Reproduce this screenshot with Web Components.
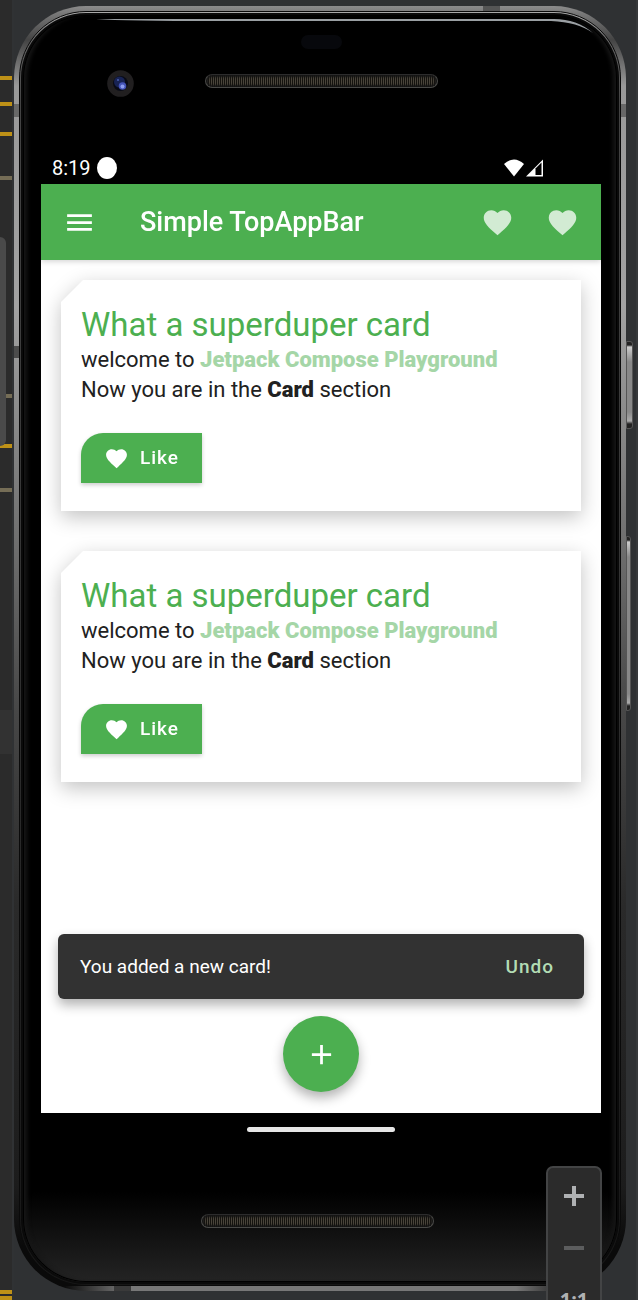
<!DOCTYPE html>
<html lang="en">
<head>
<meta charset="utf-8">
<meta name="viewport" content="width=device-width, initial-scale=1">
<title>Emulator</title>
<style>
  html, body { margin: 0; background: #2f3133; }
  body { font-family: Roboto, "Liberation Sans", sans-serif; }
</style>
</head>
<body>
<emulator-window>
  <phone-frame>
    <status-bar slot="status" time="8:19"></status-bar>
    <app-bar heading="Simple TopAppBar"></app-bar>
    <card-list>
      <play-card heading="What a superduper card"></play-card>
      <play-card heading="What a superduper card"></play-card>
    </card-list>
    <snack-bar action="Undo">You added a new card!</snack-bar>
    <add-fab></add-fab>
  </phone-frame>
  <zoom-panel slot="tools"></zoom-panel>
</emulator-window>

<script>
const HEART = '<path d="M12 21.35l-1.45-1.32C5.4 15.36 2 12.28 2 8.5 2 5.42 4.42 3 7.5 3c1.74 0 3.41.81 4.5 2.09C13.09 3.81 14.76 3 16.5 3 19.58 3 22 5.42 22 8.5c0 3.78-3.4 6.86-8.55 11.54L12 21.35z"/>';

function define(name, html) {
  customElements.define(name, class extends HTMLElement {
    constructor() {
      super();
      const t = document.createElement('template');
      t.innerHTML = html;
      this.attachShadow({ mode: 'open' }).append(t.content.cloneNode(true));
    }
    connectedCallback() {
      for (const el of this.shadowRoot.querySelectorAll('[data-attr]'))
        el.textContent = this.getAttribute(el.dataset.attr) || '';
    }
  });
}

define('emulator-window', `
<style>
  :host { display: flex; min-height: 100vh; position: relative; overflow: hidden; background: #2f3133; box-sizing: border-box; }
  .gutter { flex: none; width: 12px; background: #2b2b2b; border-right: 2px solid #303234; position: relative; overflow: hidden; }
  .gutter i { position: absolute; left: 0; width: 12px; height: 4px; background: #be9117; }
  .gutter .dim { background: #756d56; }
  .gutter .thumb { top: 237px; width: 6px; height: 209px; background: #4a4a4a; border-radius: 0 6px 6px 0; }
  .gutter .row { top: 710px; height: 44px; background: #323232; }
  .stage { flex: 1; display: flex; min-width: 0; padding: 6px 10px 9px 0; border-right: 2px solid #36383a; }
  .stage ::slotted(*) { flex: 1; min-width: 0; }
</style>
<div class="gutter">
  <i style="top:76px"></i><i style="top:102px"></i><i style="top:132px"></i>
  <i class="dim" style="top:176px"></i><i class="dim" style="top:394px"></i>
  <i style="top:444px"></i><i class="dim" style="top:488px"></i>
  <i class="thumb"></i><i class="row"></i>
  <i style="top:1290px"></i><i style="top:1296px"></i>
</div>
<div class="stage"><slot></slot></div>
<slot name="tools"></slot>`);

define('phone-frame', `
<style>
  :host { display: flex; position: relative; box-sizing: border-box; padding: 5px; border-radius: 72px;
    background:
      linear-gradient(#686868, #686868) 0 98px / 10px 13px no-repeat,
      linear-gradient(#686868, #686868) 100% 98px / 10px 13px no-repeat,
      linear-gradient(#4c4c4c, #4c4c4c) 0 340px / 10px 12px no-repeat,
      linear-gradient(#555, #555) 469px 0 / 17px 8px no-repeat,
      linear-gradient(#3a3a3a, #3a3a3a) 100px 100% / 17px 5px no-repeat,
      linear-gradient(90deg, #0000 50px, #777 110px, #777 calc(100% - 110px), #0000 calc(100% - 50px)) 0 100% / 100% 5px no-repeat,
      linear-gradient(#8c8c8c 0, #777 8px, #444 34px, #999 80px, #a2a2a2 300px, #6e6e6e 540px, #484848 700px, #2a2a2a 900px, #1c1c1c 1180px, #0a0a0a 1240px); }
  .rim { flex: 1; min-width: 0; display: flex; border-radius: 67px; padding: 3px; border: 1px solid #0a0a0a;
    background: linear-gradient(#aaa 0, #666 30px, #444 90px, #383838 500px, #2a2a2a 800px, #161616); }
  .glass { flex: 1; min-width: 0; border-radius: 63px; position: relative; display: flex; flex-direction: column;
    background: linear-gradient(#0000 calc(100% - 90px), #242424), #000;
    box-shadow: 0 0 0 2px #0a0a0a, inset 0 0 0 1px #000, inset 6px 0 4px -2px #161616, inset -6px 0 4px -2px #161616; }
  .shine { position: absolute; top: 3px; left: 73px; width: calc(100% - 96px); height: 18px; }
  .bezel { display: grid; grid-template-columns: 1fr auto 1fr; grid-template-rows: 14px 27px; row-gap: 21px; padding: 20px 16px 55px 18px; }
  .sensor { grid-column: 2; justify-self: center; width: 41px; border-radius: 7px; background: #07080c; }
  .camera { grid-area: 2 / 1; margin-left: 66px; width: 27px; height: 27px; }
  .mesh { box-sizing: border-box; width: 233px; height: 14px; border: 1px solid #4a4a48; border-top-color: #2c2c2c; border-radius: 7px;
    background: repeating-linear-gradient(90deg, #15130f 0 1px, #4a453b 1px 2px); box-shadow: inset 0 0 2px 2px #151515; }
  .bezel .mesh { grid-area: 2 / 2; margin-top: 4px; }
  .screen { flex: 1; display: flex; flex-direction: column; margin: 0 16px 0 18px; background: #fff; overflow: hidden; }
  .status { margin: 0 16px 0 18px; }
  .chin { display: flex; flex-direction: column; align-items: center; padding: 14px 16px 54px 18px; }
  .pill { width: 148px; height: 5px; border-radius: 3px; background: #e6e6e6; }
  .chin .mesh { margin-top: 82px; margin-right: 7px; }
  .key { position: absolute; left: 100%; box-sizing: border-box; border-radius: 0 3px 3px 0; border: 1px solid #555;
    background: linear-gradient(#222 3px, #ccc 5px, #888 20px, #888 calc(100% - 16px), #aaa calc(100% - 7px), #222 calc(100% - 4px)); }
  .power { top: 335px; width: 7px; height: 88px; }
  .volume { top: 530px; width: 5px; height: 175px; }
</style>
<div class="rim"><div class="glass">
  <svg class="shine" viewBox="0 0 498 18" preserveAspectRatio="none"><path d="M0 1Q30 3 120 3H455Q482 4 497 15Q480 0 455 1Z" fill="#9a9fa3"/></svg>
  <div class="bezel">
    <div class="sensor"></div>
    <svg class="camera" viewBox="0 0 27 27"><circle cx="13.500" cy="13.500" r="13.300" fill="#211f20"/><circle cx="13.500" cy="13.500" r="7.500" fill="#090b16"/><circle cx="12.500" cy="12" r="5.500" fill="#182354"/><circle cx="15.500" cy="16" r="3.800" fill="#4453b8"/><circle cx="15.500" cy="16.500" r="2" fill="#8d9df0"/><circle cx="11" cy="10" r="1" fill="#4a60b0"/></svg>
    <div class="mesh"></div>
  </div>
  <div class="status"><slot name="status"></slot></div>
  <div class="screen"><slot></slot></div>
  <div class="chin"><div class="pill"></div><div class="mesh"></div></div>
</div></div>
<span class="key power"></span><span class="key volume"></span>`);

define('status-bar', `
<style>
  :host { display: flex; align-items: center; height: 32px; padding: 0 58px 0 11px; color: #fff; font-size: 20px; line-height: 32px; }
  .dot { width: 20px; height: 22px; margin-left: 6px; border-radius: 50%; background: #fff; }
  svg { display: block; height: 18px; }
  .wifi { margin-left: auto; width: 20px; }
  .cell { width: 17px; margin-left: 2px; }
</style>
<span data-attr="time"></span><span class="dot"></span>
<svg class="wifi" viewBox="0 0 20 18"><path d="M0 5Q10 -4 20 5L10 17.500Z" fill="#fff"/></svg>
<svg class="cell" viewBox="0 0 17 18"><path d="M17 .5V17.500H0Z" fill="#fff"/><path d="M9.500 9.500L15.500 3.500V16H9.500Z" fill="#000"/></svg>`);

define('app-bar', `
<style>
  :host { display: flex; flex: none; align-items: center; height: 76px; padding: 0 6px; background: #4caf50; color: #fff; position: relative; z-index: 1; box-shadow: 0 1px 6px #0003; }
  button { display: grid; place-items: center; width: 65px; height: 65px; padding: 0; border: 0; background: none; color: inherit; }
  svg { width: 33px; height: 33px; fill: currentColor; }
  h1 { flex: 1; margin: 0 0 0 28px; font-size: 27px; line-height: 36px; font-weight: 500; white-space: nowrap; }
  .like { color: #d2ebd3; }
</style>
<button aria-label="Menu"><svg viewBox="0 0 24 24"><path d="M3 18h18v-2H3v2zm0-5h18v-2H3v2zm0-7v2h18V6H3z"/></svg></button>
<h1 data-attr="heading"></h1>
<button class="like" aria-label="Favorite"><svg viewBox="0 0 24 24">${HEART}</svg></button>
<button class="like" aria-label="Favorite"><svg viewBox="0 0 24 24">${HEART}</svg></button>`);

define('card-list', `
<style>
  :host { display: flex; flex-direction: column; flex: 1; gap: 40px; padding: 20px; }
</style>
<slot></slot>`);

define('play-card', `
<style>
  :host { display: block; filter: drop-shadow(0 6px 10px #0000003d); }
  article { padding: 24px 20px 28px; background: #fff; clip-path: polygon(22px 0, 100% 0, 100% 100%, 0 100%, 0 22px); color: #212121; }
  h2 { margin: 0; font-size: 33px; line-height: 41px; font-weight: 400; color: #4caf50; }
  p { margin: 0; font-size: 22px; line-height: 30px; }
  b { font-weight: 900; }
  .tint { color: #a5d6a7; }
  button { display: flex; align-items: center; gap: 11px; height: 50px; margin: 28px 0 0; padding: 0 23px; border: 0; border-radius: 22px 0 0 0;
    background: #4caf50; color: #fff; font: 500 19px/24px Roboto, "Liberation Sans", sans-serif; letter-spacing: 1px; box-shadow: 0 2px 4px #0003; }
  svg { width: 25px; height: 25px; fill: currentColor; }
</style>
<article>
  <h2 data-attr="heading"></h2>
  <p>welcome to <b class="tint">Jetpack Compose Playground</b></p>
  <p>Now you are in the <b>Card</b> section</p>
  <button><svg viewBox="0 0 24 24">${HEART}</svg><span>Like</span></button>
</article>`);

define('snack-bar', `
<style>
  :host { display: flex; flex: none; align-items: center; justify-content: space-between; height: 65px; margin: 0 17px; padding: 0 22px; border-radius: 6px;
    background: #323232; color: #fff; font-size: 19px; line-height: 26px; box-shadow: 0 6px 12px #0000004d; }
  button { border: 0; background: none; padding: 8px; color: #b2dcb4; font: 500 19px/24px Roboto, "Liberation Sans", sans-serif; letter-spacing: 1px; }
</style>
<span><slot></slot></span><button data-attr="action"></button>`);

define('add-fab', `
<style>
  :host { display: flex; flex: none; justify-content: center; padding: 17px 0 21px; }
  button { display: grid; place-items: center; width: 76px; height: 76px; padding: 0; border: 0; border-radius: 50%; background: #4caf50; color: #fff; box-shadow: 0 6px 12px #0000004d; }
  svg { width: 33px; height: 33px; fill: currentColor; }
</style>
<button aria-label="Add card"><svg viewBox="0 0 24 24"><path d="M19 13h-6v6h-2v-6H5v-2h6V5h2v6h6v2z"/></svg></button>`);

define('zoom-panel', `
<style>
  :host { position: absolute; right: 36px; bottom: -30px; box-sizing: border-box; width: 56px; padding: 2px 0; background: #2b2b2b; border: 2px solid #434445; border-radius: 7px; }
  button { display: grid; place-items: center; width: 100%; height: 52px; padding: 0; border: 0; background: none; color: #afb1b3; font: 700 20px/24px "Noto Sans", sans-serif; }
  svg { width: 20px; height: 20px; fill: currentColor; }
  .off { color: #5c5d5e; }
</style>
<button aria-label="Zoom in"><svg viewBox="0 0 20 20"><path d="M8 0h4v8h8v4h-8v8H8v-8H0V8h8z"/></svg></button>
<button class="off" aria-label="Zoom out"><svg viewBox="0 0 20 20"><path d="M0 8h20v4H0z"/></svg></button>
<button>1:1</button>`);
</script>
</body>
</html>
